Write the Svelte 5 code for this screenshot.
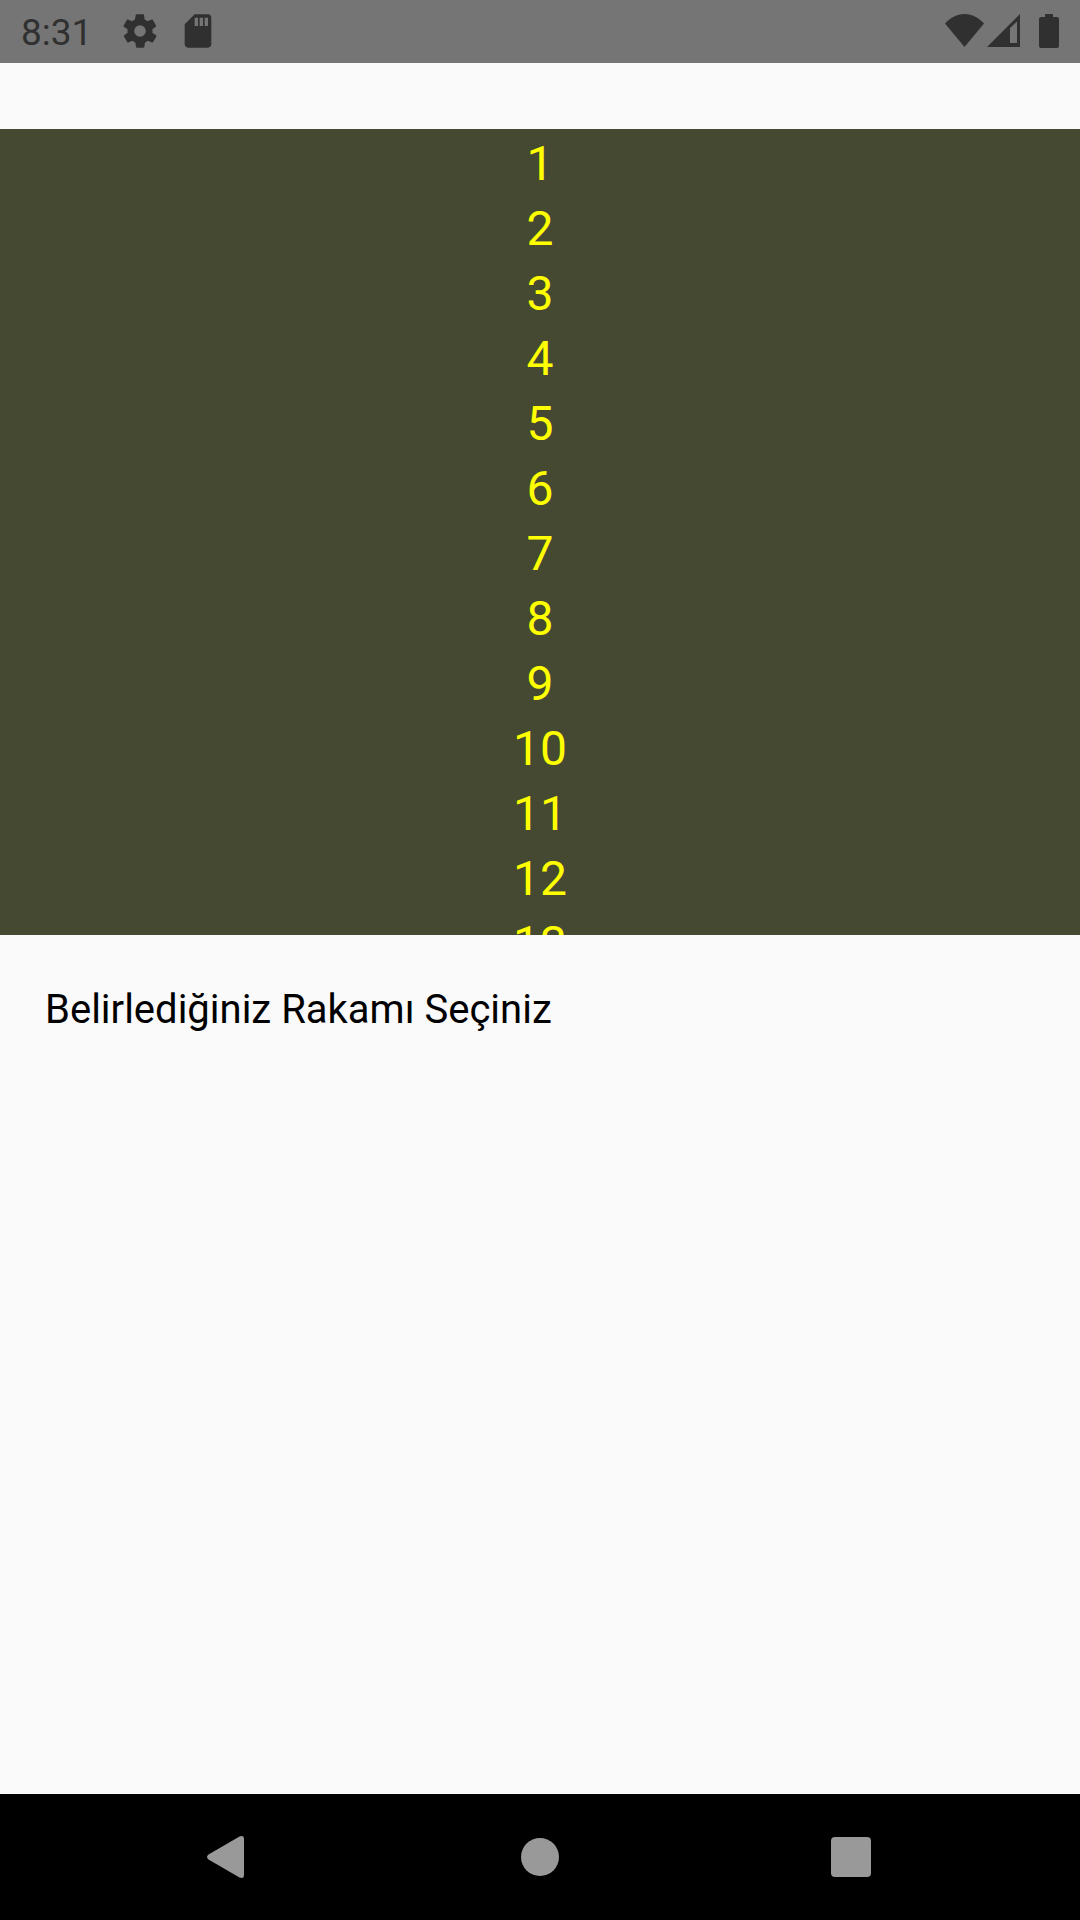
<script>
  const numbers = Array.from({ length: 13 }, (_, i) => i + 1);
  let selected = $state(null);
</script>

<div class="screen">
  <header class="status">
    <time>8:31</time>
    <svg class="gear" width="40" height="40" viewBox="0 0 24 24" aria-hidden="true">
      <path d="M19.4 13c0-.3.1-.6.1-1s0-.7-.1-1l2.1-1.6c.2-.2.3-.4.1-.7l-2-3.400c-.1-.2-.4-.3-.6-.2l-2.500 1c-.5-.4-1.100-.7-1.700-1l-.4-2.600c0-.3-.2-.5-.5-.5h-4c-.3 0-.5.200-.5.500l-.4 2.600c-.6.300-1.200.600-1.700 1l-2.500-1c-.2-.1-.5 0-.6.200l-2 3.400c-.1.300-.1.500.1.700L4.600 11c0 .3-.1.600-.1 1s0 .7.100 1l-2.100 1.600c-.2.200-.3.400-.1.700l2 3.400c.1.200.4.300.6.200l2.500-1c.5.400 1.100.700 1.700 1l.4 2.600c0 .3.200.5.500.5h4c.3 0 .5-.2.500-.5l.4-2.600c.6-.3 1.200-.6 1.700-1l2.500 1c.2.100.5 0 .6-.2l2-3.400c.1-.3.100-.5-.1-.7zM12 15.500a3.500 3.500 0 1 1 0-7 3.500 3.500 0 0 1 0 7z" />
    </svg>
    <svg class="card" width="40" height="40" viewBox="0 0 24 24" aria-hidden="true">
      <path d="M18 2h-8L4.020 8 4 20c0 1.100.9 2 2 2h12c1.100 0 2-.9 2-2V4c0-1.100-.9-2-2-2zm-6 7h-2V4h2v5zm3 0h-2V4h2v5zm3 0h-2V4h2v5z" />
    </svg>
    <span class="spacer"></span>
    <svg width="40" height="34" viewBox="0 0 40 34" aria-hidden="true">
      <path d="M0 9.500C5 4 12 0 19.500 0S34 4 39 9.500L19.500 33z" />
    </svg>
    <svg class="signal" width="34" height="34" viewBox="0 0 34 34" aria-hidden="true">
      <path fill-rule="evenodd" d="M0 33L33 0V33zM23 14V29H30V7.500z" />
    </svg>
    <svg class="battery" width="20" height="34" viewBox="0 0 20 34" aria-hidden="true">
      <path d="M6 0h8v3h4a2 2 0 0 1 2 2v27a2 2 0 0 1-2 2H2a2 2 0 0 1-2-2V5a2 2 0 0 1 2-2h4z" />
    </svg>
  </header>

  <main>
    <ul class="numbers">
      {#each numbers as n}
        <li><button type="button" aria-pressed={selected === n} onclick={() => (selected = n)}>{n}</button></li>
      {/each}
    </ul>
    <p>Belirlediğiniz Rakamı Seçiniz</p>
  </main>

  <nav>
    <button type="button" aria-label="Geri">
      <svg width="60" height="60" viewBox="0 0 60 60" aria-hidden="true">
        <path d="M9.500 27.500L40.500 9.500Q45 8 45 12V48Q45 52 40.500 50.500L9.500 32.500Q6.500 30 9.500 27.500z" />
      </svg>
    </button>
    <button type="button" aria-label="Ana ekran">
      <svg width="60" height="60" viewBox="0 0 60 60" aria-hidden="true"><circle cx="30" cy="30" r="19" /></svg>
    </button>
    <button type="button" aria-label="Son uygulamalar">
      <svg width="60" height="60" viewBox="0 0 60 60" aria-hidden="true"><rect x="10" y="10" width="40" height="40" rx="4" /></svg>
    </button>
  </nav>
</div>

<style>
  :global(body) {
    margin: 0;
    background: #fafafa;
  }

  .screen {
    display: flex;
    flex-direction: column;
    min-height: 100vh;
    font-family: Roboto, sans-serif;
    color: #000;
  }

  svg {
    display: block;
    flex: none;
  }

  .status {
    display: flex;
    align-items: center;
    height: 63px;
    padding: 0 21px 1px;
    box-sizing: border-box;
    background: #757575;
    color: #303030;
    fill: #303030;
  }

  time {
    font-size: 37px;
    line-height: 42px;
    padding-top: 4px;
  }

  .gear {
    margin-left: 28px;
  }

  .card {
    margin-left: 18px;
  }

  .spacer {
    flex: 1;
  }

  .signal {
    margin-left: 2px;
  }

  .battery {
    margin-left: 18px;
  }

  main {
    flex: 1;
    padding-top: 66px;
  }

  .numbers {
    height: 42vh;
    margin: 0;
    padding: 2px 0 0;
    box-sizing: border-box;
    overflow: hidden;
    list-style: none;
    background: #454932;
  }

  button {
    margin: 0;
    padding: 0;
    border: 0;
    background: none;
    font: inherit;
    color: inherit;
    cursor: pointer;
  }

  .numbers button {
    display: block;
    width: 100%;
    font-size: 48px;
    line-height: 65px;
    text-align: center;
    color: #ff0;
  }

  p {
    margin: 49px 45px;
    font-size: 40px;
    line-height: 52px;
  }

  nav {
    display: grid;
    grid-template-columns: repeat(3, 1fr);
    height: 126px;
    padding: 0 74px;
    background: #000;
    fill: #999;
  }

  nav button {
    display: flex;
    align-items: center;
    justify-content: center;
  }
</style>
